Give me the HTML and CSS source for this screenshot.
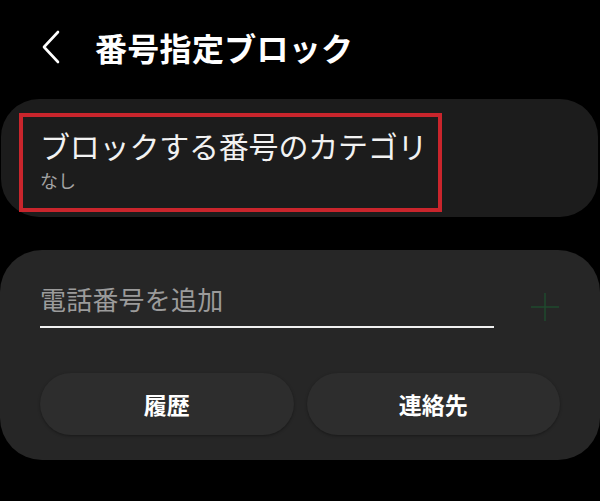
FILE: index.html
```html
<!DOCTYPE html>
<html lang="ja">
<head>
<meta charset="utf-8">
<link rel="stylesheet" href="styles.css">
</head>
<body>
<div class="screen">
  <header class="header">
    <svg class="back" width="20" height="34" viewBox="0 0 20 34"><path d="M17 2 L3 17 L17 32" fill="none" stroke="#fff" stroke-width="2.6" stroke-linecap="round" stroke-linejoin="round"/></svg>
    <h1 class="title">番号指定ブロック</h1>
  </header>

  <section class="card card-category">
    <div class="highlight">
      <div class="cat-title">ブロックする番号のカテゴリ</div>
      <div class="cat-sub">なし</div>
    </div>
  </section>

  <section class="card card-add">
    <div class="input-row">
      <div class="input">電話番号を追加</div>
      <svg class="plus" width="30" height="30" viewBox="0 0 30 30"><path d="M15 1 V29 M1 15 H29" stroke="#1f4a2e" stroke-width="1.5"/></svg>
    </div>
    <div class="buttons">
      <div class="btn">履歴</div>
      <div class="btn">連絡先</div>
    </div>
  </section>
</div>
</body>
</html>
```

FILE: styles.css
```css
html, body {
  margin: 0;
  padding: 0;
  background: #000;
}
body {
  font-family: "Noto Sans CJK JP", "Noto Sans", sans-serif;
  color: #fff;
}
.screen {
  width: 600px;
  height: 501px;
  overflow: hidden;
}
.header {
  height: 94px;
  display: flex;
  align-items: center;
  padding-left: 41px;
  box-sizing: border-box;
}
.back {
  display: block;
}
.title {
  margin: 0 0 0 34px;
  font-size: 32px;
  font-weight: 700;
  line-height: 1;
  letter-spacing: 0.3px;
}
.card {
  box-sizing: border-box;
}
.card-category {
  margin: 5px 2px 0 1px;
  height: 118px;
  border-radius: 38px;
  background: #1c1c1c;
  padding: 14px 0 0 18px;
}
.highlight {
  box-sizing: border-box;
  width: 423px;
  height: 99px;
  border: 4px solid #c9252c;
  padding: 9px 0 0 17px;
}
.cat-title {
  font-size: 30px;
  line-height: 38px;
  color: #f2f2f2;
  letter-spacing: -0.2px;
}
.cat-sub {
  font-size: 18px;
  line-height: 22px;
  color: #a3a3a3;
  margin-top: 5px;
}
.card-add {
  margin-top: 33px;
  height: 210px;
  border-radius: 42px;
  background: #262626;
  padding: 34px 40px 0 40px;
}
.input-row {
  display: flex;
  align-items: flex-start;
}
.input {
  width: 454px;
  box-sizing: border-box;
  font-size: 26px;
  line-height: 30px;
  color: #9b9b9b;
  padding-bottom: 12px;
  border-bottom: 2.5px solid #f0f0f0;
  letter-spacing: 0.2px;
}
.plus {
  margin-left: auto;
  margin-top: 8px;
}
.buttons {
  display: grid;
  grid-template-columns: 1fr 1fr;
  gap: 13px;
  margin-top: 45px;
}
.btn {
  height: 62px;
  border-radius: 31px;
  background: #2d2d2d;
  box-shadow: 0 1px 3px rgba(0, 0, 0, 0.35);
  display: flex;
  align-items: center;
  justify-content: center;
  font-size: 23px;
  font-weight: 700;
  color: #fff;
}
```
